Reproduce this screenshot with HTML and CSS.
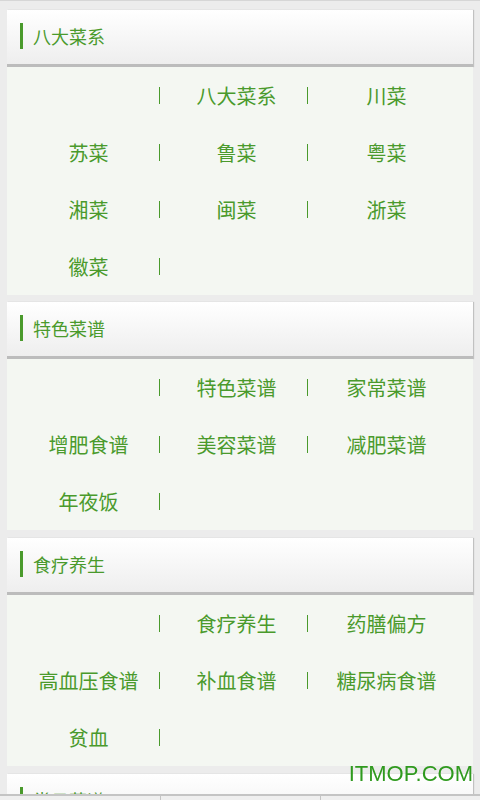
FILE: index.html
```html
<!DOCTYPE html>
<html lang="zh">
  <head>
    <meta charset="UTF-8" />
    <meta name="viewport" content="width=device-width, initial-scale=1.0" />
    <title>菜谱分类</title>
    <link rel="stylesheet" href="styles.css">
  </head>
  <body>
    <div class="page">
      <div class="section">
        <div class="section-head"><span class="bar"></span>八大菜系</div>
        <div class="section-body">
          <div class="cell"><span class="name"></span><span class="sep"></span></div>
          <div class="cell"><span class="name">八大菜系</span><span class="sep"></span></div>
          <div class="cell"><span class="name">川菜</span></div>
          <div class="cell"><span class="name">苏菜</span><span class="sep"></span></div>
          <div class="cell"><span class="name">鲁菜</span><span class="sep"></span></div>
          <div class="cell"><span class="name">粤菜</span></div>
          <div class="cell"><span class="name">湘菜</span><span class="sep"></span></div>
          <div class="cell"><span class="name">闽菜</span><span class="sep"></span></div>
          <div class="cell"><span class="name">浙菜</span></div>
          <div class="cell"><span class="name">徽菜</span><span class="sep"></span></div>
        </div>
      </div>

      <div class="section">
        <div class="section-head"><span class="bar"></span>特色菜谱</div>
        <div class="section-body">
          <div class="cell"><span class="name"></span><span class="sep"></span></div>
          <div class="cell"><span class="name">特色菜谱</span><span class="sep"></span></div>
          <div class="cell"><span class="name">家常菜谱</span></div>
          <div class="cell"><span class="name">增肥食谱</span><span class="sep"></span></div>
          <div class="cell"><span class="name">美容菜谱</span><span class="sep"></span></div>
          <div class="cell"><span class="name">减肥菜谱</span></div>
          <div class="cell"><span class="name">年夜饭</span><span class="sep"></span></div>
        </div>
      </div>

      <div class="section">
        <div class="section-head"><span class="bar"></span>食疗养生</div>
        <div class="section-body">
          <div class="cell"><span class="name"></span><span class="sep"></span></div>
          <div class="cell"><span class="name">食疗养生</span><span class="sep"></span></div>
          <div class="cell"><span class="name">药膳偏方</span></div>
          <div class="cell"><span class="name">高血压食谱</span><span class="sep"></span></div>
          <div class="cell"><span class="name">补血食谱</span><span class="sep"></span></div>
          <div class="cell"><span class="name">糖尿病食谱</span></div>
          <div class="cell"><span class="name">贫血</span><span class="sep"></span></div>
        </div>
      </div>

      <div class="section">
        <div class="section-head"><span class="bar"></span>常见菜谱</div>
        <div class="section-body"></div>
      </div>
    </div>

    <div class="tabbar">
      <div class="tab"></div>
      <div class="tab"></div>
      <div class="tab"></div>
    </div>

    <div class="watermark">ITMOP.COM</div>
  </body>
</html>
```

FILE: styles.css
```css
* {
  margin: 0;
  padding: 0;
  box-sizing: border-box;
}

body {
  font-family: "Noto Sans CJK SC", "Noto Sans", sans-serif;
  background: #ececec;
  height: 800px;
  overflow: hidden;
  border-top: 1px solid #d6d6d6;
}

.page {
  padding: 9px 7px 0;
}

.section {
  margin-bottom: 8px;
}

.section:first-child {
  margin-bottom: 7px;
}

.section-head {
  display: flex;
  align-items: center;
  height: 57px;
  padding-left: 13px;
  padding-bottom: 2px;
  background: linear-gradient(#ffffff, #eeeeee);
  border-bottom: 3px solid #bcbcbc;
  box-shadow: 1px 0 1px rgba(0, 0, 0, 0.18);
  font-size: 18px;
  color: #4a9a2c;
}

.bar {
  width: 3px;
  height: 26px;
  background: #4a9a2c;
  margin-right: 10px;
}

.section-body {
  display: grid;
  grid-template-columns: repeat(3, 148px);
  grid-auto-rows: 57px;
  padding: 0 8px;
  background: #f4f7f2;
}

.cell {
  display: flex;
  align-items: center;
  padding-left: 3px;
}

.name {
  flex: 1;
  text-align: center;
  font-size: 20px;
  color: #4a9a2c;
  white-space: nowrap;
}

.sep {
  width: 1px;
  height: 17px;
  background: #4a9a2c;
  margin-right: 3px;
}

.tabbar {
  position: fixed;
  left: 0;
  right: 0;
  bottom: 0;
  height: 6px;
  display: flex;
  background: #efefef;
  border-top: 2px solid #c4c4c4;
}

.tab {
  width: 160px;
  border-left: 1px solid #c4c4c4;
}

.tab:first-child {
  border-left: none;
}

.watermark {
  position: fixed;
  right: 7px;
  bottom: 13px;
  font-family: "Liberation Sans", Arial, sans-serif;
  font-size: 22px;
  color: #2f9a1e;
}
```
